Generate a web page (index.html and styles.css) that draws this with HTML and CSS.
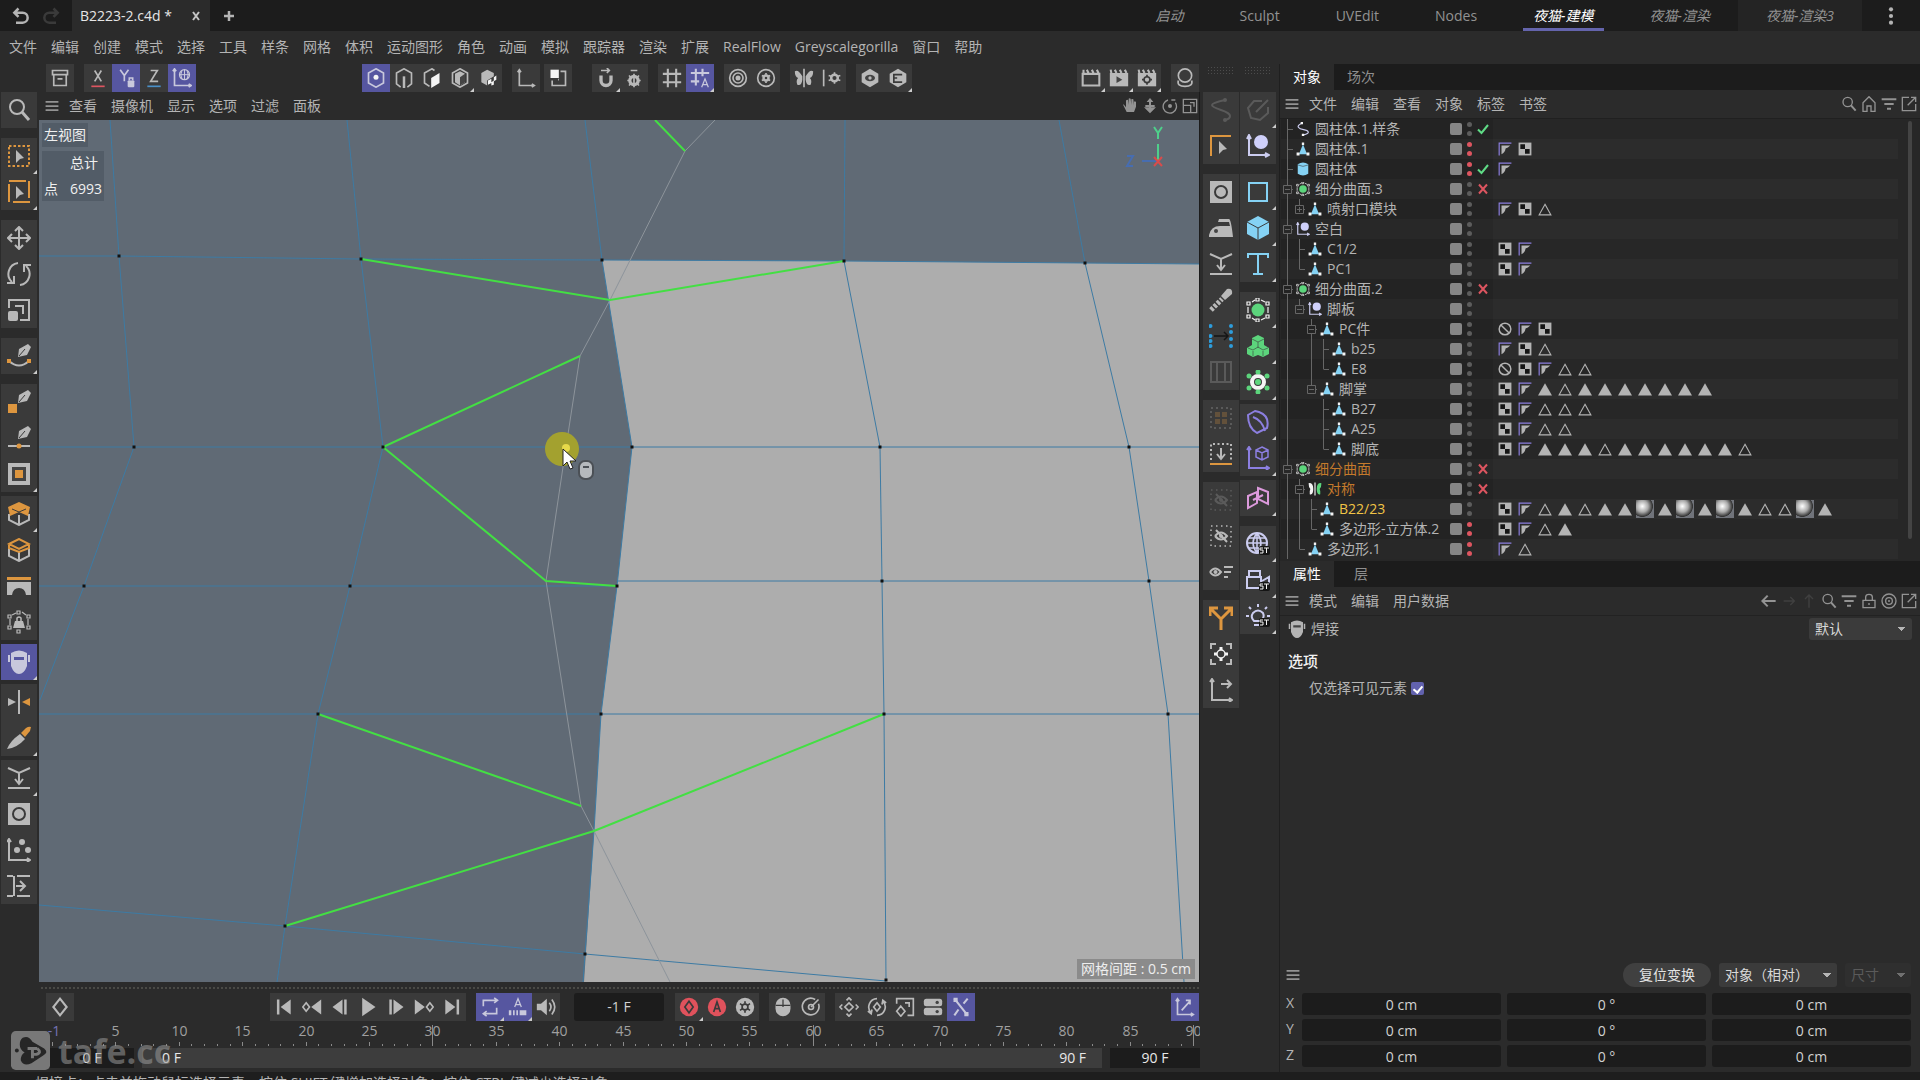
FILE: index.html
```html
<!DOCTYPE html>
<html lang="zh-CN">
<head>
<meta charset="utf-8">
<title>B2223-2.c4d</title>
<link rel="stylesheet" href="styles.css">
</head>
<body>
<svg class="defs" aria-hidden="true">
<symbol id="undo" viewBox="0 0 24 24"><path d="M9 3 4 8l5 5M5 8h9a6 6 0 0 1 0 12H6" stroke-width="3"/></symbol>
<symbol id="redo" viewBox="0 0 24 24"><path d="m15 3 5 5-5 5M19 8h-9a6 6 0 0 0 0 12h8" stroke-width="3"/></symbol>
<symbol id="close" viewBox="0 0 24 24"><path d="m6 4 12 16M18 4 6 20" stroke-width="4"/></symbol>
<symbol id="plus" viewBox="0 0 24 24"><path d="M12 2v20M2 12h20" stroke-width="5"/></symbol>
<symbol id="dots" viewBox="0 0 24 24"><g class="f"><circle cx="12" cy="4" r="2.500"/><circle cx="12" cy="12" r="2.500"/><circle cx="12" cy="20" r="2.500"/></g></symbol>
<symbol id="burger" viewBox="0 0 24 24"><path d="M1 5h22M1 12h22M1 19h22" stroke-width="3"/></symbol>
<symbol id="archive" viewBox="0 0 24 24"><path d="M3 3h18v5H3zM4.500 8v13h15V8M9 13h6"/></symbol>
<symbol id="axis-x" viewBox="0 0 24 24"><path d="m8 3 8 13M16 3 8 16"/><path class="red" d="M4 22h16"/></symbol>
<symbol id="axis-y" viewBox="0 0 24 24"><path d="m5 2 5 7 5-7M10 9v7"/><rect class="f" x="14" y="15" width="8" height="8" rx="1"/><path d="M16 15v-3h4v3"/></symbol>
<symbol id="axis-z" viewBox="0 0 24 24"><path d="M8 3h8L8 16h9"/><path class="blue" d="M4 22h16"/></symbol>
<symbol id="world" viewBox="0 0 24 24"><path d="M3 1v20h20M1 4l2-3 2 3M20 19l3 2-3 2"/><circle cx="15" cy="8" r="6" stroke-width="1.500"/><path d="M9 8h12M15 2v12M12 3q-3 5 0 10M18 3q3 5 0 10" stroke-width="1.200"/></symbol>
<symbol id="hex-point" viewBox="0 0 24 24"><path d="m12 1 9 5v12l-9 5-9-5V6z"/><circle class="white" cx="12" cy="11" r="3"/></symbol>
<symbol id="hex-edge" viewBox="0 0 24 24"><path d="M8 23 3 19V6l9-5 9 5v13l-5 4"/><path d="M12 10v14" stroke-width="3"/></symbol>
<symbol id="hex-poly" viewBox="0 0 24 24"><path d="m15 3-3-2-9 5v12l6 4"/><path class="white" d="m11 12 10-6v12l-10 6z"/></symbol>
<symbol id="hex-model" viewBox="0 0 24 24"><path d="m12 1 9 5v12l-9 5-9-5V6z"/><path class="f" d="m12 4 6 3v10l-6 4-6-4V7z"/><path class="dark" d="m12 11 6-4v10l-6 4z"/></symbol>
<symbol id="hex-tex" viewBox="0 0 24 24"><path class="f" d="m11 2 8 4v4l-8 5v6l-7-4V6z"/><path class="white" d="m12 15 4-2v4l3-2v5l-3 1v-3l-4 2zm7-4 3-2v5l-3 2z"/></symbol>
<symbol id="axis" viewBox="0 0 24 24"><path d="M4 2v19h18M2 5l2-3 2 3M19 19l3 2-3 2"/></symbol>
<symbol id="solo" viewBox="0 0 24 24"><rect class="white" x="3" y="2" width="10" height="10"/><path d="M15 4h6v17H5v-6M12 14h1"/></symbol>
<symbol id="magnet" viewBox="0 0 24 24"><path d="M6 9v6a6 6 0 0 0 12 0V9" stroke-width="4"/><path d="M6 3h10M13 0l3 3-3 3"/></symbol>
<symbol id="gear" viewBox="0 0 24 24"><circle cx="12" cy="15" r="5" stroke-width="4"/><path d="M12 7v16M4 15h3M17 15h3M6 9l3 3M18 9l-3 3M6 21l3-3M18 21l-3-3M8 3h8"/></symbol>
<symbol id="grid" viewBox="0 0 24 24"><path d="M7 1v22M17 1v22M1 7h22M1 17h22" stroke-width="2.500"/></symbol>
<symbol id="grid-a" viewBox="0 0 24 24"><path d="M7 1v20M15 1v9M1 6h22M1 16h10" stroke-width="2.500"/><path d="m14 23 4-10 4 10M15 20h6" stroke-width="1.500"/></symbol>
<symbol id="rings" viewBox="0 0 24 24"><circle cx="12" cy="12" r="10"/><circle cx="12" cy="12" r="6"/><circle class="f" cx="12" cy="12" r="3"/></symbol>
<symbol id="ring-gear" viewBox="0 0 24 24"><circle cx="12" cy="12" r="10"/><circle cx="12" cy="12" r="3" stroke-width="3"/><path d="M12 6v2M12 16v2M7 9l2 1M17 9l-2 1M7 15l2-1M17 15l-2-1"/></symbol>
<symbol id="butterfly" viewBox="0 0 24 24"><path d="M12 1v22"/><path class="f" d="M10 10Q5 1 1 4q0 7 4 8-3 3-1 8 5 2 6-6zM14 10q5-9 9-6 0 7-4 8 3 3 1 8-5 2-6-6z"/></symbol>
<symbol id="sym-gear" viewBox="0 0 24 24"><path d="M2 2v20"/><circle cx="15" cy="12" r="4" stroke-width="3"/><path d="M15 5v3M15 16v3M8 9l3 1M22 9l-3 1M8 15l3-1M22 15l-3-1"/></symbol>
<symbol id="hex-a" viewBox="0 0 24 24"><path class="f" d="m12 1 10 6v10l-10 6-10-6V7z"/><ellipse class="dark" cx="12" cy="12" rx="6" ry="4"/><circle class="f" cx="12" cy="12" r="2"/></symbol>
<symbol id="hex-b" viewBox="0 0 24 24"><path class="f" d="m12 1 10 6v10l-10 6-10-6V7z"/><path class="dk" d="M7 7v10h10M7 8h10M7 12h4"/></symbol>
<symbol id="clap" viewBox="0 0 24 24"><path d="M2 7h20v14H2zM3 7V2M9 6 7 2M15 6l-2-4M21 6l-2-4" stroke-width="2.500"/></symbol>
<symbol id="clap-play" viewBox="0 0 24 24"><path class="f" d="M1 6h22v16H1z"/><path d="M3 7 2 2M9 6 7 2M15 6l-2-4M21 6l-2-4" stroke-width="2.500"/><path class="dark" d="m9 10 7 4-7 4z"/></symbol>
<symbol id="clap-gear" viewBox="0 0 24 24"><path class="f" d="M1 6h22v16H1z"/><path d="M3 7 2 2M9 6 7 2M15 6l-2-4M21 6l-2-4" stroke-width="2.500"/><circle class="dk" cx="12" cy="14" r="3.500"/><path class="dk" d="M12 8v3M12 17v3M6 14h3M15 14h3"/></symbol>
<symbol id="ball" viewBox="0 0 24 24"><circle cx="12" cy="9" r="8"/><path d="M4 15q-2 7 8 7t8-7"/></symbol>
<symbol id="hand" viewBox="0 0 24 24"><path class="f" d="M6 14 3 10q-2-2-1 1l5 10h11l3-8V6q-2-2-3 0v5l-1-9q-2-1-3 0v8l-1-9q-2-1-3 0v9L9 3Q7 2 6 4z"/></symbol>
<symbol id="dolly" viewBox="0 0 24 24"><path d="M12 3v14M5 12h14" stroke-width="3"/><path class="f" d="m12 0 5 6H7zM3 14h18l-9 9z"/></symbol>
<symbol id="orbit" viewBox="0 0 24 24"><path d="M9 3a10 10 0 1 0 11 4M14 3h6"/><circle class="f" cx="12" cy="12" r="3"/></symbol>
<symbol id="maxi" viewBox="0 0 24 24"><path d="M2 2h20v20H2zM2 11h11v11M12 7h6v6"/></symbol>
<symbol id="search" viewBox="0 0 24 24"><circle cx="10" cy="9" r="7"/><path d="m15 14 7 8" stroke-width="3"/></symbol>
<symbol id="sel-rect" viewBox="0 0 24 24"><path class="org" d="M2 2h20v20H2z" stroke-dasharray="2.500 2"/><path class="f" d="m9 6 8 8-4 1-4 4z"/></symbol>
<symbol id="sel-line" viewBox="0 0 24 24"><path class="org" d="M2 1h17M2 4v18M6 22h17M22 1v17"/><path class="f" d="m9 6 8 8-4 1-4 4z"/></symbol>
<symbol id="move" viewBox="0 0 24 24"><path d="M12 1v22M1 12h22M8 5l4-4 4 4M8 19l4 4 4-4M5 8l-4 4 4 4M19 8l4 4-4 4"/></symbol>
<symbol id="rotate" viewBox="0 0 24 24"><path d="M11 1A11 11 0 0 0 5 20M13 23a11 11 0 0 0 6-19M0 21h7v-7M24 3h-7v7"/></symbol>
<symbol id="scale" viewBox="0 0 24 24"><path d="M2 10V2h20v20H13M8 8h8v8"/><rect class="f" x="1" y="13" width="10" height="10" rx="2"/></symbol>
<symbol id="pen" viewBox="0 0 24 24"><path d="M2 17q10 9 20 0"/><path class="of" d="M0 15h4v4H0zM20 15h4v4h-4z"/><path class="f" d="m11 13 1-8 9-5 3 3-4 8z"/><path class="dk" d="m12 12 6-7" stroke-width="1"/></symbol>
<symbol id="pen-poly" viewBox="0 0 24 24"><path class="of" d="M1 14h9v9H1z"/><path class="f" d="m11 13 1-8 9-5 3 3-4 8z"/><path class="dk" d="m12 12 6-7" stroke-width="1"/></symbol>
<symbol id="pen-edge" viewBox="0 0 24 24"><path d="M1 20h22"/><circle class="of" cx="12" cy="20" r="2.500"/><path class="f" d="m11 13 1-8 9-5 3 3-4 8z"/><path class="dk" d="m12 12 6-7" stroke-width="1"/></symbol>
<symbol id="inset" viewBox="0 0 24 24"><path class="f" d="M1 1h22v22H1z"/><path class="dark" d="M5 5h14v14H5z"/><path class="of" d="M8 8h8v8H8z"/></symbol>
<symbol id="cube-o" viewBox="0 0 24 24"><path d="M2 12v6l10 5 10-5v-6M12 13v9"/><path class="of" d="m12 0 11 5-2 9-9-4-9 4-2-9z"/><path class="dk" d="m5 7 7 3 7-3" stroke-width="1"/></symbol>
<symbol id="cube-b" viewBox="0 0 24 24"><path d="M2 9v9l10 5 10-5V9M12 13v9"/><path class="org" d="m2 6 10-5 10 5-10 5zM2 6v4l10 4 10-4V6"/></symbol>
<symbol id="bridge" viewBox="0 0 24 24"><path class="of" d="M0 3h24v3H0z"/><path class="f" d="M0 8h24v13h-5q-1-7-7-7t-7 7H0z"/></symbol>
<symbol id="lockcage" viewBox="0 0 24 24"><path d="M1 5h3v3H1zM10 1h3v3h-3zM20 5h3v3h-3zM1 16h3v3H1zM10 20h3v3h-3zM20 16h3v3h-3zM3 9v6M21 9v6M5 5l4-2M15 2l4 3" stroke-width="1.200"/><path class="f" d="M8 11h8l2 7H6z"/><path d="M10 11V8q2-2 4 0v3" stroke-width="1.500"/></symbol>
<symbol id="mask" viewBox="0 0 24 24"><path class="f" d="M4 3q8-5 16 0v13q-3 8-8 8t-8-8zM1 5h2v7H1zM21 5h2v7h-2z"/><path class="slot" d="M7 7h10v3H7z"/></symbol>
<symbol id="mirror" viewBox="0 0 24 24"><path d="M12 0v24"/><path class="f" d="m1 8 8 4-8 4z"/><path class="of" d="m23 8-8 4 8 4z"/></symbol>
<symbol id="knife" viewBox="0 0 24 24"><path class="f" d="m13 8 5 5Q10 22 0 23q3-8 13-15z"/><path class="of" d="m14 7 5-5q3-2 5-1l-1 4-5 6z"/></symbol>
<symbol id="collapse" viewBox="0 0 24 24"><path d="m1 2 11 5 11-5M12 7v10M8 13l4 5 4-5M1 22h22"/></symbol>
<symbol id="disc" viewBox="0 0 24 24"><path class="f" d="M1 1h22v22H1z"/><circle class="dk" cx="12" cy="12" r="6"/></symbol>
<symbol id="scatter" viewBox="0 0 24 24"><path d="M2 1v21h21M0 4l2-3 2 3M20 20l3 2-3 2"/><g class="f"><circle cx="15" cy="4" r="3"/><circle cx="10" cy="12" r="3"/><circle cx="21" cy="12" r="3"/></g></symbol>
<symbol id="slide" viewBox="0 0 24 24"><path d="M0 2h6M10 2h13M0 22h6M10 22h13M7 2v20M9 12h9M13 7l5 5-5 5"/></symbol>
<symbol id="spline-s" viewBox="0 0 24 24"><path d="M16 2Q3 5 3 7t9 5 9 6-5 4"/><circle class="f" cx="16" cy="2" r="2"/><circle class="f" cx="16" cy="22" r="2"/></symbol>
<symbol id="sketch" viewBox="0 0 24 24"><path d="M16 3H8L2 10l3 10 9 2 8-7V9M10 14 22 2"/></symbol>
<symbol id="corner-sel" viewBox="0 0 24 24"><path class="org" d="M2 22V2h20"/><path class="f" d="m10 7 8 8-4 1-4 4z"/></symbol>
<symbol id="null" viewBox="0 0 24 24"><path class="lav" d="M3 3v18h19M1 5l2-4 2 4M19 19l4 2-4 2"/><circle class="lavf" cx="15" cy="8" r="7"/></symbol>
<symbol id="iron" viewBox="0 0 24 24"><path class="f" d="M0 19q2-9 11-9h10L20 6H9l1-3h10q2 0 4 18H0z"/><circle class="dark" cx="7" cy="15" r="2"/></symbol>
<symbol id="rod" viewBox="0 0 24 24"><path d="m2 22 11-11" stroke-width="5" stroke-dasharray="3 1.500"/><path class="f" d="m12 8 6-7q6-1 5 5l-7 6z"/></symbol>
<symbol id="stitch" viewBox="0 0 24 24"><path class="ink" d="M5 12h14M15 8l4 4-4 4" stroke-width="1.500"/><g class="bluef"><circle cx="1.500" cy="2" r="2"/><circle cx="1.500" cy="12" r="2"/><circle cx="1.500" cy="17" r="2"/><circle cx="1.500" cy="22" r="2"/><circle cx="22" cy="2" r="2"/><circle cx="22" cy="8" r="2"/><circle cx="22" cy="15" r="2"/><circle cx="22" cy="22" r="2"/></g></symbol>
<symbol id="loopcut" viewBox="0 0 24 24"><path d="M2 2h20v20H2zM8 2v20M16 2v20"/></symbol>
<symbol id="dotgrid" viewBox="0 0 24 24"><path d="M2 2h20v20H2z" stroke-dasharray="2 3"/><path class="of" d="M6 6h5v5H6zM13 6h5v5h-5zM6 13h5v5H6zM13 13h5v5h-5z"/></symbol>
<symbol id="project" viewBox="0 0 24 24"><path d="M2 18V2h20v16" stroke-dasharray="2 2.500"/><path d="M12 6v10M8 12l4 5 4-5"/><path class="org" d="M1 22h22"/></symbol>
<symbol id="hide" viewBox="0 0 24 24"><path d="M2 2h20v20H2z" stroke-dasharray="1.500 3.500" stroke-width="1.500"/><path d="M6 12q6-7 12 0-6 7-12 0M7 6l11 12"/><circle class="f" cx="12" cy="12" r="2"/></symbol>
<symbol id="eye-list" viewBox="0 0 24 24"><path d="M1 12q5-7 11 0-6 7-11 0M15 7h9M15 12h7M15 17h4"/><circle class="f" cx="6.500" cy="12" r="2"/></symbol>
<symbol id="split" viewBox="0 0 24 24"><path class="org" d="M12 24V13L2 3M12 13 22 3M1 10V2h8M15 2h8v8" stroke-width="3"/></symbol>
<symbol id="center" viewBox="0 0 24 24"><path d="M2 7V2h5M17 2h5v5M2 17v5h5M17 22h5v-5"/><circle class="wht" cx="12" cy="12" r="4" stroke-width="1.500"/><path class="wht" d="M12 5v3M12 16v3M5 12h3M16 12h3" stroke-width="3"/></symbol>
<symbol id="axis-move" viewBox="0 0 24 24"><path d="M3 1v21h20M1 4l2-3 2 3M20 20l3 2-3 2M12 6h10M18 2l4 4-4 4"/></symbol>
<symbol id="square" viewBox="0 0 24 24"><path class="cy" d="M3 3h18v18H3z"/></symbol>
<symbol id="cube" viewBox="0 0 24 24"><path class="cyf" d="m12 0 11 6v12l-11 6-11-6V6z"/><path class="dk" d="m1 6 11 6 11-6M12 12v12" stroke-width="1"/></symbol>
<symbol id="tee" viewBox="0 0 24 24"><path class="cy" d="M2 6V2h20v4M12 2v20M7 22h10"/></symbol>
<symbol id="sds" viewBox="0 0 24 24"><circle class="grf" cx="12" cy="12" r="6.500"/><path class="wht" d="M1 4h3v3H1zM10 0h3v3h-3zM20 4h3v3h-3zM1 17h3v3H1zM10 21h3v3h-3zM20 17h3v3h-3zM2 9v6M22 9v6M6 4l3-2M15 2l4 2M6 20l3 2M15 22l4-2" stroke-width="1.200"/></symbol>
<symbol id="cloner" viewBox="0 0 24 24"><path class="grf" d="m12 1 6 3v7l5 3v6l-6 3-5-2-5 2-6-3v-6l5-3V4z"/><path class="dk" d="m6 5 6 3 6-3M12 8v6M2 14l5 2 5-3 5 3 5-2M7 17v5M17 17v5" stroke-width=".6"/></symbol>
<symbol id="field" viewBox="0 0 24 24"><circle class="wht" cx="12" cy="12" r="6" stroke-width="4"/><g class="grf"><circle cx="12" cy="12" r="3"/><circle cx="12" cy="2" r="2.500"/><circle cx="12" cy="22" r="2.500"/><circle cx="3" cy="6" r="2.500"/><circle cx="21" cy="6" r="2.500"/><circle cx="3" cy="18" r="2.500"/><circle cx="21" cy="18" r="2.500"/></g></symbol>
<symbol id="bend" viewBox="0 0 24 24"><path class="pur" d="M9 1 2 5q0 13 9 18l10-5Q24 6 13 2zM7 7q9 3 12 14"/></symbol>
<symbol id="axis-cube" viewBox="0 0 24 24"><path class="pur" d="M3 1v21h20M1 4l2-3 2 3M20 20l3 2-3 2"/><path class="pur" d="m16 1 6 3v7l-6 3-6-3V4zM10 4l6 3 6-3M16 7v7" stroke-width="1.500"/></symbol>
<symbol id="portal" viewBox="0 0 24 24"><path class="pink" d="m2 10 9-4v11l-9 5zM12 2l10 4v12l-10-5zM7 14l10-5"/></symbol>
<symbol id="globe-st" viewBox="0 0 24 24"><g class="lav"><circle cx="11" cy="11" r="10"/><path d="M1 11h20M3 6h16M3 16h16M11 1v20M11 1Q3 11 11 21M11 1q8 10 0 20" stroke-width="1.500"/></g><rect class="ink-f" x="13" y="14" width="11" height="9" rx="2"/><path class="wht" d="M17 16h-3v2h3v3h-3M18 16h5M20.500 16v5" stroke-width="1"/></symbol>
<symbol id="cam-st" viewBox="0 0 24 24"><path class="lav" d="M3 3h11v6H3zM1 9h14v11H1zM16 13l7-4v9"/><rect class="ink-f" x="13" y="14" width="11" height="9" rx="2"/><path class="wht" d="M17 16h-3v2h3v3h-3M18 16h5M20.500 16v5" stroke-width="1"/></symbol>
<symbol id="bulb-st" viewBox="0 0 24 24"><path class="lav" d="M8 17q-4-4-1-8 5-5 10 0 2 4-2 8zM8 21h5M12 0v3M3 3l2 2M21 3l-2 2M0 12h3M21 12h3"/><rect class="ink-f" x="13" y="14" width="11" height="9" rx="2"/><path class="wht" d="M17 16h-3v2h3v3h-3M18 16h5M20.500 16v5" stroke-width="1"/></symbol>
<symbol id="home" viewBox="0 0 24 24"><path d="M3 23V10l9-9 9 9v13h-6v-8H9v8z"/></symbol>
<symbol id="filter" viewBox="0 0 24 24"><path d="M1 5h22M5 12h14M9 19h6" stroke-width="3"/></symbol>
<symbol id="popout" viewBox="0 0 24 24"><path d="M12 2H2v20h20V12M10 14 22 2M15 2h7v7"/></symbol>
<symbol id="back" viewBox="0 0 24 24"><path d="M22 12H2M10 4l-8 8 8 8" stroke-width="3"/></symbol>
<symbol id="fwd" viewBox="0 0 24 24"><path d="M4 12h16M14 6l6 6-6 6"/></symbol>
<symbol id="up" viewBox="0 0 24 24"><path d="M12 22V3M6 9l6-6 6 6"/></symbol>
<symbol id="lock" viewBox="0 0 24 24"><path d="M3 11h18v11H3zM7 11V6q0-4 5-4t5 4v5M12 15v3"/></symbol>
<symbol id="target" viewBox="0 0 24 24"><circle cx="12" cy="12" r="10.500"/><circle cx="12" cy="12" r="5"/><circle class="f" cx="12" cy="12" r="1.500"/></symbol>
<symbol id="diamond" viewBox="0 0 24 24"><path d="m12 2 8 10-8 10-8-10z" stroke-width="2.500"/></symbol>
<symbol id="first" viewBox="0 0 24 24"><path d="M5 3v18" stroke-width="3"/><path class="f" d="M20 3v18L8 12z"/></symbol>
<symbol id="prevkey" viewBox="0 0 24 24"><path d="m5 7 4 5-4 5-4-5z"/><path class="f" d="M23 3v18l-12-9z"/></symbol>
<symbol id="prev" viewBox="0 0 24 24"><path class="f" d="M15 3v18L3 12zM17 3h3v18h-3z"/></symbol>
<symbol id="play" viewBox="0 0 24 24"><path class="f" d="m5 1 16 11L5 23z"/></symbol>
<symbol id="next" viewBox="0 0 24 24"><path class="f" d="m9 3 12 9-12 9zM4 3h3v18H4z"/></symbol>
<symbol id="nextkey" viewBox="0 0 24 24"><path d="m19 7 4 5-4 5-4-5z"/><path class="f" d="m1 3 12 9-12 9z"/></symbol>
<symbol id="last" viewBox="0 0 24 24"><path d="M19 3v18" stroke-width="3"/><path class="f" d="m4 3 12 9-12 9z"/></symbol>
<symbol id="loop" viewBox="0 0 24 24"><path d="M4 11V4h17M4 20h16v-7M17 1l4 3-4 3M8 17l-4 3 4 3"/></symbol>
<symbol id="autokey" viewBox="0 0 24 24"><path d="m8 12 4-10 4 10M9 9h6" stroke-width="1.500"/><path class="f" d="M1 16h3v6H1zM6 16h2v6H6zM10 16h2v6h-2zM14 16h8v6h-8z"/></symbol>
<symbol id="sound" viewBox="0 0 24 24"><path class="f" d="M1 8h5l7-6v20l-7-6H1z"/><path d="M16 7q4 5 0 10M19 3q7 9 0 18"/></symbol>
<symbol id="rec" viewBox="0 0 24 24"><circle class="redf" cx="12" cy="12" r="11"/><path class="dk" d="m12 5 5 7-5 7-5-7z"/></symbol>
<symbol id="rec-a" viewBox="0 0 24 24"><circle class="redf" cx="12" cy="12" r="11"/><path class="dk" d="m8 18 4-12 4 12M9 14h6"/></symbol>
<symbol id="rec-gear" viewBox="0 0 24 24"><circle class="f" cx="12" cy="12" r="11"/><circle class="dk" cx="12" cy="12" r="3.500"/><path class="dk" d="M12 5v3M12 16v3M6 8l3 2M18 8l-3 2M6 16l3-2M18 16l-3-2"/></symbol>
<symbol id="mouse" viewBox="0 0 24 24"><rect class="f" x="3" y="1" width="18" height="22" rx="9"/><path class="dk" d="M3 10h18M12 3v9" stroke-width="1.500"/></symbol>
<symbol id="gauge" viewBox="0 0 24 24"><path d="M17 3a10 10 0 1 0 4 5M12 12l9-9"/><circle cx="12" cy="12" r="3"/></symbol>
<symbol id="k-pos" viewBox="0 0 24 24"><path d="m12 7 5 5-5 5-5-5zM9 4l3-3 3 3M9 20l3 3 3-3M4 9l-3 3 3 3M20 9l3 3-3 3"/></symbol>
<symbol id="k-rot" viewBox="0 0 24 24"><path d="m12 7 4 5-4 5-4-5zM12 2A10 10 0 0 0 5 19M12 22a10 10 0 0 0 7-17M1 17l4 3 1-5M23 7l-4-3-1 5"/></symbol>
<symbol id="k-scl" viewBox="0 0 24 24"><path d="M2 8V2h20v20h-7M12 7h5v5M7 11l5 6-5 6-5-6z"/></symbol>
<symbol id="k-par" viewBox="0 0 24 24"><rect class="f" x="1" y="2" width="22" height="9" rx="3"/><rect class="f" x="1" y="13" width="22" height="9" rx="3"/><circle class="dark" cx="17" cy="6.500" r="2"/><circle class="dark" cx="17" cy="17.500" r="2"/></symbol>
<symbol id="k-pla" viewBox="0 0 24 24"><path d="m4 2 16 20M4 22l5-7M15 8l5-6" stroke-width="2.500"/><path class="f" d="M3 1h5v5H3zM16 18h5v5h-5z"/></symbol>
<symbol id="axis-arrow" viewBox="0 0 24 24"><path d="M3 2v19h19M1 5l2-3 2 3M19 19l3 2-3 2M8 16 18 5M13 4h5v5"/></symbol>
<symbol id="poly" viewBox="0 0 24 24"><path class="cyf" d="m12 4 7 17H5z"/><path class="white" d="M10 1h4v4h-4zM1 18h5v5H1zM18 18h5v5h-5z"/></symbol>
<symbol id="cyl" viewBox="0 0 24 24"><path class="cyf" d="M3 4q9-6 18 0v16q-9 6-18 0z"/><path class="dk" d="M3 5q9 5 18 0" stroke-width="1"/></symbol>
<symbol id="tree-spline" viewBox="0 0 24 24"><path class="lav" d="M10 2Q2 6 4 9t9 4 8 4-8 5"/><path class="white" d="M8 0h4v4H8zM10 20h4v4h-4z"/></symbol>
<symbol id="tree-sym" viewBox="0 0 24 24"><path class="wht" d="M12 1v22"/><path class="white" d="M9 12Q9 1 1 2q0 7 3 10-2 4-1 9 6 2 6-9z"/><path class="grf" d="M15 12q0-11 8-10 0 7-3 10 2 4 1 9-6 2-6-9z"/></symbol>
<symbol id="tag-flag" viewBox="0 0 24 24"><path class="pur" d="M2 23V2h21"/><path class="f" d="M6 6h15q-4 4-8 5-1 7-7 10z"/></symbol>
<symbol id="tag-check" viewBox="0 0 24 24"><path class="f" d="M1 1h22v22H1z"/><path class="ink-f" d="M4 4h8v8H4zM12 12h8v8h-8z"/></symbol>
<symbol id="tag-tri" viewBox="0 0 24 24"><path d="m12 4 10 18H2z"/></symbol>
<symbol id="tag-full" viewBox="0 0 24 24"><path class="f" d="m12 2 12 21H0z"/></symbol>
<symbol id="tag-ban" viewBox="0 0 24 24"><circle cx="12" cy="12" r="10" stroke-width="2.500"/><path d="m5 5 14 14" stroke-width="2.500"/></symbol>
<symbol id="ok" viewBox="0 0 24 24"><path class="grn" d="m2 13 7 7L22 4" stroke-width="4"/></symbol>
<symbol id="no" viewBox="0 0 24 24"><path class="red" d="m4 3 16 18M20 3 4 21" stroke-width="4"/></symbol>
</svg>

<div class="app">
  <header class="titlebar">
    <div class="history"><button class="flat" aria-label="撤销"><svg class="ico"><use href="#undo"/></svg></button><button class="flat dim" aria-label="重做" disabled><svg class="ico"><use href="#redo"/></svg></button></div>
    <div class="doc-tab"><span>B2223-2.c4d *</span><button class="flat" aria-label="关闭"><svg class="ico s12"><use href="#close"/></svg></button></div>
    <button class="flat add" aria-label="新建"><svg class="ico s12"><use href="#plus"/></svg></button>
    <nav class="workspaces">
      <a href="#" class="it">启动</a><a href="#">Sculpt</a><a href="#">UVEdit</a><a href="#">Nodes</a><a href="#" class="it current">夜猫-建模</a><a href="#" class="it">夜猫-渲染</a><a href="#" class="it boxed">夜猫-渲染3</a>
    </nav>
    <button class="flat more" aria-label="更多"><svg class="ico"><use href="#dots"/></svg></button>
  </header>
  <nav class="menubar" data-menu="文件 编辑 创建 模式 选择 工具 样条 网格 体积 运动图形 角色 动画 模拟 跟踪器 渲染 扩展 RealFlow Greyscalegorilla 窗口 帮助"></nav>

  <div class="body">
    <main class="main">
      <div class="toolbar">
        <div class="cluster" data-tools="archive|axis-x axis-y* axis-z world*"></div>
        <div class="modes">
          <div class="cluster" data-tools="hex-point* hex-edge hex-poly hex-model, hex-tex|axis"></div>
          <div class="cluster solo" data-tools="solo"></div>
          <div class="cluster" data-tools="magnet, gear|grid grid-a*,|rings ring-gear|butterfly sym-gear|hex-a hex-b,"></div>
        </div>
        <div class="cluster" data-tools="clap, clap-play, clap-gear,|ball"></div>
      </div>
      <div class="work">
        <aside class="rail">
          <div class="stack" data-tools="search|sel-rect, sel-line,|move rotate scale|pen,|pen-poly pen-edge inset,"></div>
          <div class="stack tight" data-tools="cube-o, cube-b bridge lockcage|mask*,|mirror knife,|collapse, disc scatter slide"></div>
        </aside>
        <section class="view">
          <div class="panel-menu">
            <svg class="ico s14"><use href="#burger"/></svg>
            <nav data-menu="查看 摄像机 显示 选项 过滤 面板"></nav>
            <div class="panel-icons" data-icons="hand dolly orbit maxi"></div>
          </div>
          <div class="canvas">
            <svg class="mesh" viewBox="39 120 1160 862" preserveAspectRatio="none">
              <path class="face" d="M602 260 844 261 1199 264V982H584L594 831 601 714 617 586 632 447z"/>
              <g class="wire">
                <path d="M39 256H119L361 259 602 260 844 261 1085 263 1199 264M39 447H1199M39 586H617M617 581H1199M39 714H1199M39 905 285 926 585 954 886 981"/>
                <path d="M110 120 119 256 134 447 84 586 40 700M347 120 361 259 383 447 350 586 318 714 285 926 277 982M585 120 602 260 632 447 617 586 601 714 594 831 585 954 583 982M845 120 844 261 880 447 882 581 884 714 886 981M1059 120 1085 263 1129 447 1149 581 1168 714 1184 982"/>
              </g>
              <path class="loose" d="M715 120 685 151 610 300 580 356 566 447 546 581 581 806 594 831 670 982"/>
              <path class="cut" d="M655 120 685 151M361 259 610 300 844 261M580 356 383 447 546 581 617 586M318 714 581 806M285 926 594 831 884 714"/>
              <path class="verts" d="M119 256h0M361 259h0M602 260h0M844 261h0M1085 263h0M134 447h0M383 447h0M632 447h0M880 447h0M1129 447h0M84 586h0M350 586h0M617 586h0M882 581h0M1149 581h0M318 714h0M601 714h0M884 714h0M1168 714h0M285 926h0M585 954h0M886 980h0"/>
              <circle class="halo" cx="562" cy="449" r="17"/><circle class="spot" cx="566" cy="448" r="4"/>
              <path class="pointer" d="M563 449v17l4-4 3 7 3-1-3-7h6z"/>
              <g class="held"><rect x="579" y="461" width="14" height="18" rx="6"/><path d="M583 467h6"/></g>
              <g class="gizmo"><path class="gy" d="M1158 144v16M1154 127l4 6 4-6M1158 133v6"/><path class="gz" d="M1142 161h15M1127 156h6l-6 10h6"/><path class="gx" d="m1154 157 8 9M1162 157l-8 9"/></g>
            </svg>
            <div class="hud"><span class="hud-name">左视图</span><dl class="stats"><dt></dt><dd>总计</dd><dt>点</dt><dd>6993</dd></dl></div>
            <span class="gridinfo">网格间距 : 0.5 cm</span>
          </div>
        </section>
      </div>
      <section class="timeline">
        <div class="transport">
          <div class="cluster" data-tools="diamond"></div>
          <div class="cluster mid"><div class="cluster" data-tools="first prevkey prev play next nextkey last|loop*, autokey*, sound"></div><input class="field frame" aria-label="当前帧" value="-1 F"><div class="cluster" data-tools="rec, rec-a rec-gear|mouse gauge|k-pos k-rot k-scl k-par k-pla*"></div></div>
          <div class="cluster" data-tools="axis-arrow*"></div>
        </div>
        <svg class="ruler" id="ruler" viewBox="40 0 1160 26" preserveAspectRatio="xMinYMin meet"></svg>
        <div class="range"><input class="field start" aria-label="起始帧" value="0 F"><div class="bar"><span>0 F</span><span>90 F</span></div><input class="field end" aria-label="结束帧" value="90 F"></div>
      </section>
    </main>

    <aside class="rails">
      <div class="rail"><i class="grip"></i><div class="stack" data-tools="spline-s! corner-sel|disc iron collapse rod stitch loopcut!|dotgrid! project|hide! hide eye-list|split center axis-move"></div></div>
      <div class="rail"><i class="grip"></i><div class="stack" data-tools="sketch!, null|square, cube, tee,"></div>
      <div class="stack tight after" data-tools="sds, cloner, field,|bend, axis-cube,|portal,"></div><div class="stack" data-tools="globe-st, cam-st, bulb-st,"></div></div>
    </aside>

    <aside class="side">
      <div class="tabs"><button class="on">对象</button><button>场次</button></div>
      <div class="panel-menu"><svg class="ico s14"><use href="#burger"/></svg><nav data-menu="文件 编辑 查看 对象 标签 书签"></nav><div class="panel-icons" data-icons="search home filter popout"></div></div>
      <div class="objects"><ul class="tree" id="tree"></ul><i class="scroll"></i></div>
      <div class="tabs"><button class="on">属性</button><button>层</button></div>
      <div class="panel-menu"><svg class="ico s14"><use href="#burger"/></svg><nav data-menu="模式 编辑 用户数据"></nav><div class="panel-icons" data-icons="back fwd! up! search filter lock target popout"></div></div>
      <form class="attrs">
        <div class="tool-name"><svg class="ico s18"><use href="#mask"/></svg><span>焊接</span><select aria-label="预设"><option>默认</option></select></div>
        <h2>选项</h2>
        <label class="check">仅选择可见元素<input type="checkbox" checked></label>
      </form>
      <section class="coords">
        <div class="coord-head"><svg class="ico s14"><use href="#burger"/></svg><button class="pill">复位变换</button><select class="space" aria-label="空间"><option>对象（相对）</option></select><select class="size" aria-label="尺寸模式" disabled><option>尺寸</option></select></div>
        <div class="coord-row"><span>X</span><input class="field" aria-label="X 位置" value="0 cm"><input class="field" aria-label="X 旋转" value="0 °"><input class="field" aria-label="X 尺寸" value="0 cm"></div>
        <div class="coord-row"><span>Y</span><input class="field" aria-label="Y 位置" value="0 cm"><input class="field" aria-label="Y 旋转" value="0 °"><input class="field" aria-label="Y 尺寸" value="0 cm"></div>
        <div class="coord-row"><span>Z</span><input class="field" aria-label="Z 位置" value="0 cm"><input class="field" aria-label="Z 旋转" value="0 °"><input class="field" aria-label="Z 尺寸" value="0 cm"></div>
      </section>
    </aside>
  </div>
  <footer class="status">焊接点：点击并拖动鼠标选择元素。按住 SHIFT 键增加选择对象；按住 CTRL 键减少选择对象。</footer>
  <div class="mark"><svg viewBox="0 0 40 40"><rect class="mark-bg" width="40" height="40" rx="5"/><path class="mark-ink" d="M12 7q6-3 10 4l12 7q5 4-1 7l-12 8q-8 4-11-3 0-6 4-8-5-3-5-8 0-5 3-7z"/><path class="mark-fg" d="M17 18h10M22 18v10M27 18q5 4-1 6h-3"/><circle class="mark-ink" cx="6" cy="20" r="2"/></svg><span>tafe.cc</span></div>
</div>
<script src="app.js"></script>
</body>
</html>
```
FILE: styles.css
```css
* { box-sizing: border-box; }
body, h2, ul, dl, dd { margin: 0; padding: 0; }
body { background: #2b2b2b; color: #b4b4b4; font: 14px/20px "Open Sans", "Noto Sans CJK SC", sans-serif; }
button, input, select { font: inherit; color: inherit; border: 0; margin: 0; padding: 0; background: none; }
a { color: inherit; text-decoration: none; }
.defs { position: absolute; width: 0; height: 0; }

/* icons */
.ico { width: 20px; height: 20px; display: block; flex: none; fill: none; stroke: currentColor; stroke-width: 2; }
.s12 { width: 12px; height: 12px; }
.s14 { width: 14px; height: 14px; }
.s18 { width: 18px; height: 18px; }
.f { fill: currentColor; stroke: none; }
.white { fill: #f4f4f4; stroke: none; }
.wht { stroke: #f4f4f4; }
.dark { fill: #444; stroke: none; }
.slot { fill: var(--slot, #444); stroke: none; }
.dk { stroke: #3a3a3a; }
.ink { stroke: #151515; }
.ink-f { fill: #151515; stroke: none; }
.org { stroke: #dd963f; }
.of { fill: #dd963f; stroke: none; }
.red { stroke: #dd5560; }
.redf { fill: #e0525c; stroke: none; }
.blue { stroke: #4a90c8; }
.bluef { fill: #2d9cdb; stroke: none; }
.cy { stroke: #85d2f4; }
.cyf { fill: #85d2f4; stroke: none; }
.grn { stroke: #5fdb86; }
.grf { fill: #5cd57c; stroke: none; }
.lav { stroke: #cccdf0; }
.lavf { fill: #cfd0fa; stroke: none; }
.pur { stroke: #8c7fe0; }
.pink { stroke: #dc9adc; }

/* frame */
.app { height: 100vh; min-height: 1000px; display: grid; grid-template-rows: 31px 33px minmax(0, 1fr) 8px; position: relative; overflow: hidden; }
.titlebar { background: #1c1c1c; display: flex; align-items: stretch; }
.flat { display: flex; align-items: center; }
.dim { opacity: .2; }
.history { display: flex; align-items: center; gap: 10px; padding-left: 11px; width: 72px; }
.doc-tab { background: #2b2b2b; color: #e6e6e6; display: flex; align-items: center; justify-content: space-between; width: 138px; padding: 0 8px; }
.doc-tab .flat { color: #c4c4c4; }
.add { margin-left: 13px; }
.workspaces { margin-left: auto; display: flex; }
.workspaces a { padding: 6px 28px 0; color: #929292; position: relative; }
.it { font-style: italic; }
.workspaces .current { color: #fff; }
.current::after { content: ""; position: absolute; left: 18px; right: 18px; bottom: 0; height: 3px; background: #6464ac; }
.boxed { background: #242424; }
.more { margin: 0 19px; }
.menubar { display: flex; align-items: center; gap: 14px; padding: 0 0 2px 9px; }
.body { min-height: 0; display: grid; grid-template-columns: minmax(0, 1fr) 79px 641px; }
.main { display: flex; flex-direction: column; min-width: 0; }
.toolbar { height: 28px; padding: 0 1px 0 46px; display: flex; justify-content: space-between; }
.modes { display: flex; }
.solo { margin: 0 20px 0 4px; }
.cluster, .group { display: flex; }
.cluster { gap: 10px; }
.tool { width: 28px; height: 28px; display: grid; place-items: center; background: #3a3a3a; position: relative; color: #b9b9b9; }
.tool.active { background: #5656a0; color: #c8c8dc; --slot: #5656a0; }
.tool.off .ico { opacity: .25; }
.tool.more-arrow::after { content: ""; position: absolute; right: 0; bottom: 0; border: 2px solid; border-color: transparent #ccc #ccc transparent; }

.work { flex: 1; min-height: 0; display: flex; }
.rail { padding-left: 1px; width: 39px; flex: none; }
.stack .group { flex-direction: column; margin-bottom: 10px; }
.stack.tight .group { margin-bottom: 4px; }
.stack .tool { width: 36px; height: 36px; }
.stack .ico { width: 24px; height: 24px; }
.rail > .stack.tight { margin-top: -6px; }
.rail > .stack.after { margin: 0 0 10px; }
.rail > .stack.after > :last-child { margin: 0; }
.view { flex: 1; min-width: 0; display: flex; flex-direction: column; border-right: 1px solid #1c1c1c; }
.panel-menu { height: 28px; flex: none; display: flex; align-items: center; gap: 10px; padding: 0 5px; }
.view .panel-menu { padding: 0 1px 0 6px; }
.panel-menu nav { display: flex; gap: 14px; }
.panel-menu .ico, .coord-head .ico { color: #939393; }
.panel-icons { margin-left: auto; display: flex; gap: 4px; }
.panel-icons .ico { width: 16px; height: 16px; }
.canvas { flex: 1; min-height: 0; position: relative; background: #606a75; overflow: hidden; }
.mesh { position: absolute; width: 100%; height: 100%; fill: none; }
.face { fill: #adadad; }
.wire { stroke: #3d7ba4; stroke-width: 1; }
.loose { stroke: #8d949b; }
.cut { stroke: #43df43; stroke-width: 2; }
.verts { stroke: #111; stroke-width: 3; stroke-linecap: square; }
.halo { fill: #a3a12f; }
.spot { fill: #e6d94a; }
.pointer { fill: #fff; stroke: #222; }
.held { fill: #b5b9bd; stroke: #4b5056; stroke-width: 2; }
.gizmo { stroke-width: 2; }
.gy { stroke: #4fcf8b; }
.gz { stroke: #476db0; }
.gx { stroke: #d84c4c; }
.hud { position: absolute; left: 3px; top: 3px; color: #f0f0f0; display: flex; flex-direction: column; align-items: flex-start; gap: 4px; }
.hud-name { background: #525c67; padding: 2px; }
.stats { background: #525c67; width: 62px; display: grid; grid-template-columns: 26px 1fr; row-gap: 6px; padding: 2px; }
.gridinfo { position: absolute; right: 4px; bottom: 3px; background: #8b8b8b; color: #eee; padding: 0 4px; }

.timeline { height: 90px; flex: none; padding: 11px 1px 0 6px; background-image: radial-gradient(#4a4a46 1px, transparent 1px); background-size: 4px 4px; background-repeat: repeat-x; background-position: 0 4px; margin-left: 40px; }
.transport { display: flex; justify-content: space-between; height: 28px; }
.field { background: #1c1c1c; color: #d2d2d2; text-align: center; border-radius: 3px; min-width: 0; }
.frame { width: 90px; margin: 0 1px 0 4px; }
.ruler { display: block; width: calc(100% + 7px); height: 26px; margin: 0 0 1px -6px; fill: #a0a0a0; font-size: 14px; text-anchor: middle; }
.ticks { stroke: #8a8a8a; }
.now { fill: #7373b5; }
.range { display: flex; height: 20px; gap: 8px; padding-left: 4px; margin-right: -1px; }
.range .field { width: 90px; border-radius: 0; color: #e8e8e8; }
.range .start { width: 84px; }
.bar { flex: 1; background: #3d3d3d; display: flex; justify-content: space-between; padding: 0 16px 0 20px; color: #e8e8e8; }

.rails { display: flex; padding-left: 2px; }
.rails .rail { width: 37px; }
.grip { display: block; height: 8px; margin: 2px 4px 18px; background: radial-gradient(#4c4c4c 1px, transparent 1px) 0 0 / 3px 3px; }

.side { display: flex; flex-direction: column; min-width: 0; border-left: 1px solid #1f1f1f; }
.tabs { background: #1c1c1c; height: 26px; flex: none; display: flex; }
.tabs button { width: 54px; color: #8f8f8f; }
.tabs .on { background: #2b2b2b; color: #fff; }
.side .panel-menu { padding-right: 3px; }
.side .panel-menu nav { flex: 1; }
.objects { border-top: 1px solid #202020; display: flex; background: #272727; padding: 0 4px 2px 1px; flex: none; }
.tree { flex: 1; list-style: none; }
.tree li { height: 20px; display: flex; align-items: center; }
.tree li:nth-child(even) { background: #2c2c2c; }
.node { width: 212px; height: 20px; display: flex; align-items: center; background: #00000014; flex: none; }
.guide { width: 12px; height: 20px; flex: none; stroke: #666; fill: none; }
.node > .ico { width: 14px; height: 14px; margin: 0 5px 0 3px; }
.name { flex: 1; white-space: nowrap; color: #b4b4b4; }
.name.parent { color: #c47a2c; }
.name.picked { color: #f0c446; }
.layer { width: 12px; height: 12px; border-radius: 2px; background: #868686; }
.vis { width: 5px; height: 16px; margin: 0 5px; display: grid; gap: 4px; align-content: center; }
.vis i { width: 5px; height: 5px; border-radius: 50%; background: #5c5c5c; }
.vis.hidden i { background: #dd5560; }
.state { width: 16px; }
.state .ico { width: 12px; height: 12px; }
.tags { display: flex; align-items: center; padding-left: 2px; }
.tags .ico { width: 14px; height: 14px; margin: 0 3px; }
.tags .ball { width: 18px; height: 18px; margin: 0 1px; background: radial-gradient(circle at 35% 35%, #fff, #aaa 35%, #333 62%, #70737a 66%); }
.scroll { width: 4px; border-radius: 2px; background: #444; margin: 2px 4px 20px 10px; }
.attrs { flex: 1; border-top: 1px solid #222; padding: 1px 8px; }
.tool-name { display: flex; align-items: center; gap: 5px; height: 24px; }
.tool-name select { margin-left: auto; width: 103px; }
select { appearance: none; height: 22px; padding: 0 6px; border-radius: 3px; color: #d8d8d8; background-color: #3b3b3b; background-image: linear-gradient(to top right, transparent 50%, #b5b5b5 0), linear-gradient(to top left, transparent 50%, #b5b5b5 0); background-repeat: no-repeat; background-size: 4px 4px; background-position: right 10px center, right 6px center; }
.attrs h2 { font-size: 15px; line-height: 20px; font-weight: 500; color: #f2f2f2; margin: 10px 0 7px; }
.check { display: flex; align-items: center; gap: 4px; padding-left: 21px; }
.check input { appearance: none; width: 13px; height: 13px; border-radius: 2px; background: #6262ae; display: grid; place-items: center; }
.check input::after { content: ""; width: 4px; height: 7px; border: solid #fff; border-width: 0 2px 2px 0; transform: rotate(40deg); }
.coords { padding: 0 9px 1px 6px; }
.coord-head { display: flex; align-items: center; gap: 8px; height: 28px; margin-bottom: 4px; }
.coord-head .ico { margin-right: auto; }
.coord-head select { height: 24px; }
.pill { background: #404040; color: #e2e2e2; height: 24px; width: 88px; border-radius: 12px; }
.space { width: 118px; }
.coord-head .size { width: 66px; color: #8a8a8a; opacity: .5; background-color: #333; }
.coord-row { display: grid; grid-template-columns: 10px 1fr 1fr 1fr; column-gap: 6px; margin-bottom: 4px; }
.coord-row .field { height: 22px; }
.status { background: #1e1e1e; padding: 2px 35px 0; white-space: nowrap; overflow: hidden; line-height: 18px; }
.mark { position: absolute; left: 11px; bottom: 10px; display: flex; align-items: center; gap: 8px; opacity: .55; color: #999; font: 700 34px/38px "Open Sans", sans-serif; pointer-events: none; }
.mark svg { width: 39px; height: 39px; }
.mark-bg { fill: #b8b8b8; }
.mark-ink { fill: #222; }
.mark-fg { fill: none; stroke: #b8b8b8; stroke-width: 3; }
```
FILE: app.js
```js
const icon = (id, cls = '') => `<svg class="ico ${cls}"><use href="#${id}"/></svg>`;

document.querySelectorAll('[data-menu]').forEach(el => {
  el.innerHTML = el.dataset.menu.split(' ').map(t => `<a href="#">${t}</a>`).join('');
});

// Suffixes: * active, "," has a flyout, ! disabled. "|" separates groups.
const parse = s => ({ id: s.replace(/[*,!]/g, ''), on: s.includes('*'), more: s.includes(','), off: s.includes('!') });

document.querySelectorAll('[data-tools]').forEach(el => {
  el.innerHTML = el.dataset.tools.split('|').map(g => '<div class="group">' + g.split(' ').map(s => {
    const t = parse(s);
    return `<button class="tool${t.on ? ' active' : ''}${t.more ? ' more-arrow' : ''}${t.off ? ' off' : ''}" aria-label="${t.id}"${t.off ? ' disabled' : ''}>${icon(t.id)}</button>`;
  }).join('') + '</div>').join('');
});

document.querySelectorAll('[data-icons]').forEach(el => {
  el.innerHTML = el.dataset.icons.split(' ').map(s => {
    const t = parse(s);
    return `<button class="flat${t.off ? ' dim' : ''}" aria-label="${t.id}">${icon(t.id)}</button>`;
  }).join('');
});

// level, icon, name, toggle, state, hidden, tags, name class
const rows = [
  [0, 'tree-spline', '圆柱体.1.样条', '', 'ok', 0, ''],
  [0, 'poly', '圆柱体.1', '', '', 1, 'fc'],
  [0, 'cyl', '圆柱体', '', 'ok', 1, 'f'],
  [0, 'sds', '细分曲面.3', '-', 'no', 0, ''],
  [1, 'poly', '喷射口模块', '+', '', 0, 'fct'],
  [0, 'null', '空白', '-', '', 0, ''],
  [1, 'poly', 'C1/2', '', '', 0, 'cf'],
  [1, 'poly', 'PC1', '', '', 0, 'cf'],
  [0, 'sds', '细分曲面.2', '-', 'no', 0, ''],
  [1, 'null', '脚板', '-', '', 0, ''],
  [2, 'poly', 'PC件', '-', '', 0, 'bfc'],
  [3, 'poly', 'b25', '', '', 0, 'fct'],
  [3, 'poly', 'E8', '', '', 0, 'bcftt'],
  [2, 'poly', '脚掌', '-', '', 0, 'cfTtTTTTTTT'],
  [3, 'poly', 'B27', '', '', 0, 'cfttt'],
  [3, 'poly', 'A25', '', '', 0, 'cftt'],
  [3, 'poly', '脚底', '', '', 0, 'cfTTTtTTTTTTt'],
  [0, 'sds', '细分曲面', '-', 'no', 0, '', 'parent'],
  [1, 'tree-sym', '对称', '-', 'no', 0, '', 'parent'],
  [2, 'poly', 'B22/23', '', '', 0, 'cftTtTTmTmTmTttmT', 'picked'],
  [2, 'poly', '多边形-立方体.2', '', '', 1, 'cftT'],
  [1, 'poly', '多边形.1', '', '', 1, 'ft'],
];
const tagIcon = { f: 'tag-flag', c: 'tag-check', t: 'tag-tri', T: 'tag-full', b: 'tag-ban' };

// True when a later row continues the branch drawn at this level.
const continues = (i, level) => {
  if (level === 0) return true;
  for (let j = i + 1; j < rows.length && rows[j][0] >= level; j++) if (rows[j][0] === level) return true;
  return false;
};

document.getElementById('tree').innerHTML = rows.map(([level, ic, name, toggle, state, hidden, tags, cls = ''], i) => {
  let guides = '';
  for (let l = 0; l <= level; l++) {
    const go = continues(i, l);
    let d = go ? 'M6.5 0V20' : l === level ? 'M6.5 0V10' : '';
    if (l === level) {
      d += 'M6.5 10.5H12';
      if (toggle) d = 'M6.5 0V6' + (go ? 'M6.5 15V20' : '') + 'M2.5 6.5h8v8h-8zM4 10.5h5M10.5 10.5H12' + (toggle === '+' ? 'M6.5 8V13' : '');
    }
    guides += `<svg class="guide" viewBox="0 0 12 20"><path d="${d}"/></svg>`;
  }
  const t = [...tags].map(c => c === 'm' ? '<i class="ball"></i>' : icon(tagIcon[c])).join('');
  return `<li><div class="node">${guides}${icon(ic)}<span class="name ${cls}">${name}</span><i class="layer"></i><span class="vis${hidden ? ' hidden' : ''}"><i></i><i></i></span><span class="state">${state ? icon(state) : ''}</span></div><div class="tags">${t}</div></li>`;
}).join('');

// Time ruler: one tick per frame, a label every five frames.
let ticks = '', labels = '<text class="now" x="54" y="15">-1</text>';
for (let f = 0; f <= 90; f++) {
  const x = Math.round(52 + f * 12.68) + 0.5;
  ticks += `M${x} ${f === 30 || f === 60 || f === 90 ? 4 : f % 5 ? 23 : 21}V25`;
  if (f && f % 5 === 0) labels += `<text x="${x}" y="15">${f}</text>`;
}
document.getElementById('ruler').innerHTML = `<path class="ticks" d="${ticks}"/>${labels}`;
```
